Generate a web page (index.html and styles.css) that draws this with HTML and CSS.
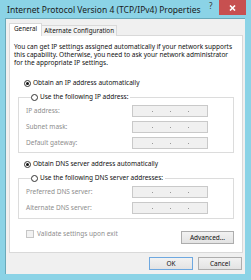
FILE: index.html
```html
<!DOCTYPE html>
<html lang="en">
<head>
    <meta charset="UTF-8">
    <title>Internet Protocol Version 4 (TCP/IPv4) Properties</title>
    <link rel="stylesheet" href="styles.css">
</head>
<body>
    <div class="window">
        <!-- Barra de titulo -->
        <div class="titlebar">
            <span class="title">Internet Protocol Version 4 (TCP/IPv4) Properties</span>
            <span class="help">?</span>
            <span class="close">
                <svg width="7" height="6" viewBox="0 0 7 6"><path d="M1 0.5 L6 5.5 M6 0.5 L1 5.5" stroke="#fff" stroke-width="1.6"/></svg>
            </span>
        </div>

        <div class="client">
            <div class="tabs">
                <div class="tab active">General</div>
                <div class="tab">Alternate Configuration</div>
            </div>

            <div class="panel">
                <p class="intro">You can get IP settings assigned automatically if your network supports<br>this capability. Otherwise, you need to ask your network administrator<br>for the appropriate IP settings.</p>

                <div class="option first"><span class="radio checked"></span>Obtain an IP address automatically</div>

                <fieldset class="group">
                    <legend class="option"><span class="radio"></span>Use the following IP address:</legend>
                    <div class="field"><span class="label">IP address:</span><span class="ip"><i></i><i></i><i></i></span></div>
                    <div class="field"><span class="label">Subnet mask:</span><span class="ip"><i></i><i></i><i></i></span></div>
                    <div class="field"><span class="label">Default gateway:</span><span class="ip"><i></i><i></i><i></i></span></div>
                </fieldset>

                <div class="option dns"><span class="radio checked"></span>Obtain DNS server address automatically</div>

                <fieldset class="group dns-group">
                    <legend class="option"><span class="radio"></span>Use the following DNS server addresses:</legend>
                    <div class="field"><span class="label">Preferred DNS server:</span><span class="ip"><i></i><i></i><i></i></span></div>
                    <div class="field"><span class="label">Alternate DNS server:</span><span class="ip"><i></i><i></i><i></i></span></div>
                </fieldset>

                <div class="validate">
                    <span class="check"></span>
                    <span class="label">Validate settings upon exit</span>
                    <span class="button advanced">Advanced...</span>
                </div>
            </div>

            <div class="buttons">
                <span class="button default">OK</span>
                <span class="button">Cancel</span>
            </div>
        </div>
    </div>
</body>
</html>
```

FILE: styles.css
```css
body {
    margin: 0;
    font-family: "Noto Sans", "Open Sans", sans-serif;
    background-color: #8bd3e6;
}

.window {
    width: 251px;
    height: 280px;
    display: flex;
    flex-direction: column;
    background-color: #8bd3e6;
}

.titlebar {
    height: 18px;
    display: flex;
    align-items: flex-start;
    position: relative;
}

.title {
    margin-left: 7px;
    margin-top: 4px;
    font-size: 8.5px;
    line-height: 12px;
    color: #1a1a1a;
    white-space: nowrap;
}

.help {
    position: absolute;
    left: 209px;
    top: 1px;
    font-size: 8px;
    line-height: 10px;
    color: #333;
}

.close {
    position: absolute;
    left: 219px;
    top: 0;
    width: 27px;
    height: 15px;
    background-color: #c75050;
    display: flex;
    align-items: center;
    justify-content: center;
}

.client {
    flex: 1;
    margin: 0 6px 6px 5px;
    padding: 4px 2px 0 3px;
    background-color: #f0f0f0;
    border-left: 1px solid #6aa9b9;
    border-top: 1px solid #6aa9b9;
    display: flex;
    flex-direction: column;
    font-size: 6.5px;
    line-height: 8px;
    color: #111;
}

.tabs {
    display: flex;
    align-items: flex-end;
    height: 13px;
    margin-bottom: -1px;
    position: relative;
    z-index: 1;
}

.tab {
    height: 10px;
    padding: 0 2px;
    border: 1px solid #d9d9d9;
    border-bottom: none;
    background-color: #f3f3f3;
    line-height: 10px;
    white-space: nowrap;
    font-size: 6.3px;
}

.tab.active {
    height: 12px;
    padding: 0 4px;
    background-color: #fff;
    margin-right: -1px;
    z-index: 2;
}

.panel {
    height: 216px;
    background-color: #fff;
    border: 1px solid #d9d9d9;
    display: flex;
    flex-direction: column;
}

.intro {
    margin: 7px 4px 0 4px;
    white-space: nowrap;
}

.option {
    display: flex;
    align-items: center;
    height: 10px;
    white-space: nowrap;
}

.option.first {
    margin: 11px 0 0 14px;
}

.option.dns {
    margin: 6px 0 0 14px;
}

.radio {
    width: 5px;
    height: 5px;
    border: 1px solid #333;
    border-radius: 50%;
    margin-right: 2px;
    background-color: #fff;
    display: flex;
    align-items: center;
    justify-content: center;
}

.radio.checked::after {
    content: "";
    width: 3px;
    height: 3px;
    border-radius: 50%;
    background-color: #111;
}

.group {
    margin: 4px 8px 0 8px;
    padding: 3px 0 3px 7px;
    border: 1px solid #dcdcdc;
    min-inline-size: 0;
}

.group legend {
    margin-left: 5px;
    padding: 0 2px 0 0;
}

.group.dns-group {
    padding-bottom: 4px;
}

.field {
    display: flex;
    align-items: center;
    height: 12px;
    margin-bottom: 4px;
}

.field:last-child {
    margin-bottom: 0;
}

.label {
    width: 106px;
    color: #8e8e8e;
    white-space: nowrap;
}

.ip {
    width: 55px;
    height: 10px;
    border: 1px solid #c9c9c9;
    background-color: #f0f0f0;
    display: flex;
    align-items: flex-end;
    gap: 17px;
    padding-left: 19px;
}

.ip i {
    width: 1px;
    height: 1px;
    margin-bottom: 4px;
    background-color: #999;
}

.validate {
    display: flex;
    align-items: center;
    margin: 10px 8px 0 16px;
    height: 14px;
}

.check {
    width: 6px;
    height: 6px;
    border: 1px solid #c6c6c6;
    background-color: #f2f2f2;
    margin-right: 3px;
    margin-top: -5px;
}

.validate .label {
    width: auto;
    flex: 1;
    margin-top: -5px;
}

.button {
    width: 42px;
    height: 11px;
    border: 1px solid #adadad;
    background: linear-gradient(#f2f2f2, #e3e3e3);
    text-align: center;
    line-height: 11px;
    color: #111;
    white-space: nowrap;
}

.button.advanced {
    width: 51px;
    margin-top: 2px;
}

.buttons {
    display: flex;
    justify-content: flex-end;
    gap: 5px;
    margin-top: 4px;
    padding-right: 1px;
}

.button.default {
    border-color: #6ea8e0;
}
```
